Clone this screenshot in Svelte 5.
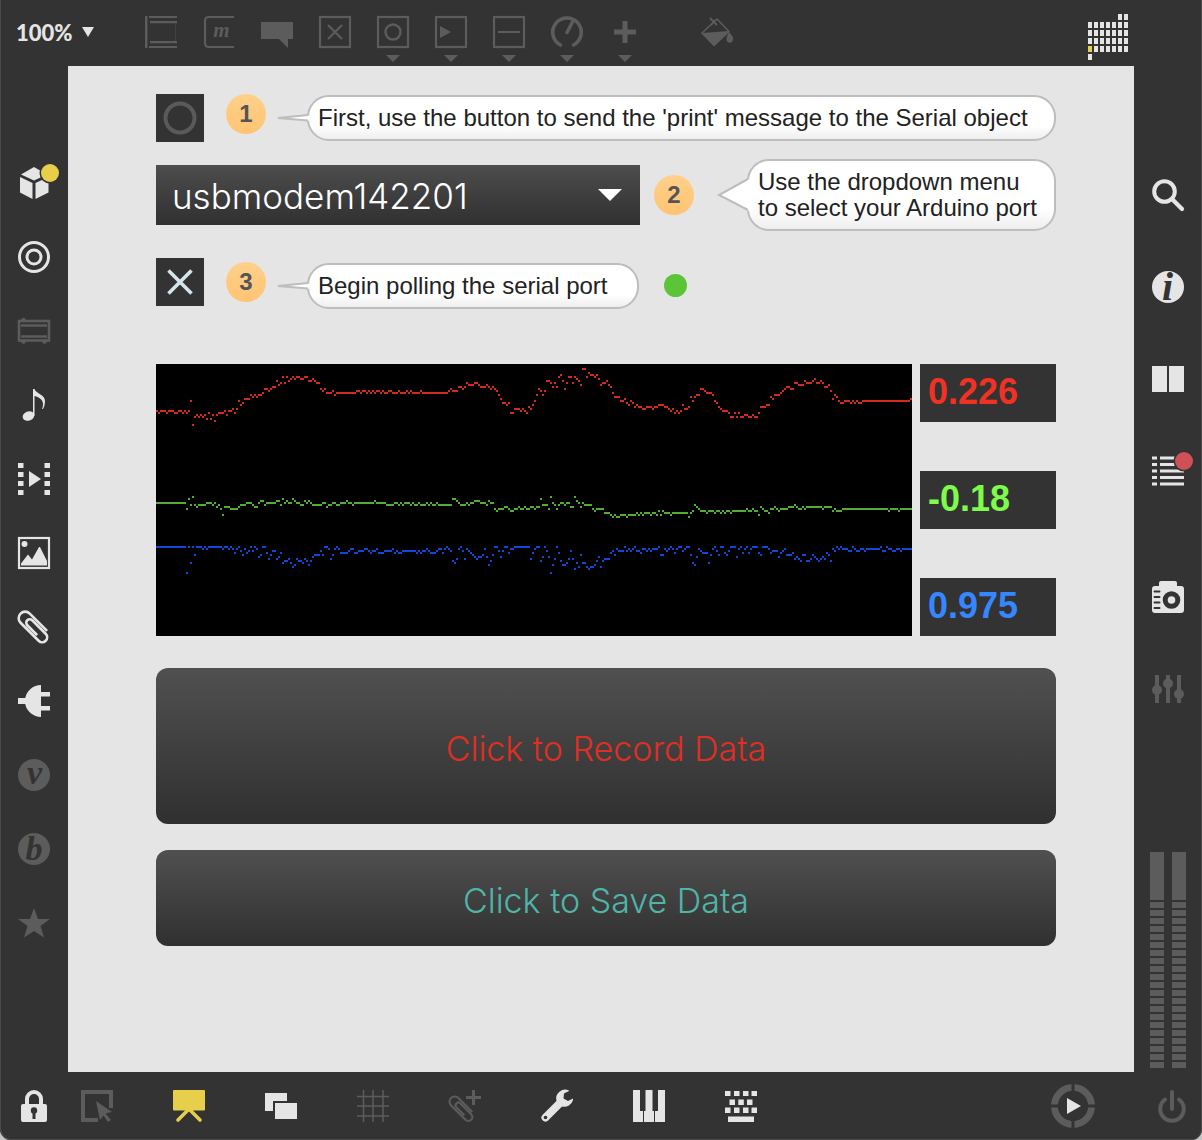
<script>
  const clip = '<path transform="rotate(45 16 16)" d="M28 9.5H3.5a6.5 6.5 0 0 0 0 13H29a5 5 0 0 0 0-10H10a3.5 3.5 0 0 0 0 7H24" fill="none" stroke="currentColor" stroke-width="2.6"/>';
  const frame = '<rect x="1" y="1" width="30" height="30" fill="none" stroke="currentColor" stroke-width="2.200"/>';
  const glyph = (letter, size, x, y) =>
    `<text x="${x}" y="${y}" text-anchor="middle" font-family="Liberation Serif, serif" font-style="italic" font-weight="700" font-size="${size}" fill="#333">${letter}</text>`;

  const matrixCells = [[5, 0], [6, 0], [0, 5]];
  for (let row = 1; row < 5; row++) for (let col = 0; col < 7; col++) matrixCells.push([col, row]);

  const icons = {
    object: '<path d="M0 0h2.500v32H0zM4 0h28v2H4zM5 5h27v2.200H5zM5 25h27v2.200H5zM4 30h28v2H4z"/><path d="M30.500 7v18" stroke="currentColor" stroke-width=".4"/>',
    message: '<path d="M31 1H6Q2 1 2 5v22q0 4 4 4h25" fill="none" stroke="currentColor" stroke-width="2.200"/><text x="18.500" y="21" text-anchor="middle" font-family="Liberation Serif, serif" font-style="italic" font-weight="700" font-size="21">m</text>',
    comment: '<path d="M0 6h32v17h-5v9l-9-9H0z"/>',
    toggle: frame + '<path d="M9 9l14 14M23 9L9 23" stroke="currentColor" stroke-width="2.2"/>',
    button: frame + '<circle cx="16" cy="16" r="7.500" fill="none" stroke="currentColor" stroke-width="2.4"/>',
    number: frame + '<path d="M5 10l11 6-11 6z"/>',
    slider: frame + '<path d="M5 16h22" stroke="currentColor" stroke-width="2"/>',
    dial: '<path d="M9.500 29A14.300 14.300 0 1 1 22.500 29M16 16.500L22 5" fill="none" stroke="currentColor" stroke-width="3.600" stroke-linecap="round"/>',
    add: '<path d="M13.500 5h5v8.500H27v5h-8.500V27h-5v-8.500H5v-5h8.500z"/>',
    paint: '<path d="M1 17L16 3l12 12.500-15 14z" fill="none" stroke="currentColor" stroke-width="1.500"/><path d="M1 17l27-2-15 15z"/><path d="M9 2l7 7M14 4l-4 5" stroke="currentColor" stroke-width="1.800"/><path d="M28 16q5 5 4 8a3.300 3.300 0 0 1-6.500 0q-.2-3 2.500-8z"/>',
    cube: '<path d="M3 7.500L16 0l13 7.500-13 6zM2 10l12.500 6v16L2 25.500zM17.500 16l13-6v15.500l-13 6.500z"/><circle cx="32" cy="6" r="10.500" fill="#333"/><circle cx="32" cy="6" r="9" fill="#e7cf4b"/>',
    target: '<g fill="none" stroke="currentColor" stroke-width="3"><circle cx="16" cy="16" r="14.500"/><circle cx="16" cy="16" r="7"/></g>',
    rack: '<rect x="1" y="6" width="30" height="19.500" fill="none" stroke="currentColor" stroke-width="2.600"/><path d="M3 10.500h26M3 21.500h26" stroke="currentColor" stroke-width="2.400"/><circle cx="5.500" cy="5" r="2.300"/><circle cx="5.500" cy="26.500" r="2.300"/><circle cx="26.500" cy="26.500" r="2.300"/>',
    note: '<ellipse cx="10.500" cy="27" rx="6" ry="4.600" transform="rotate(-22 10.500 27)"/><path d="M15 0h1.500c1.500 5 11 5 10.500 13q-.2 4-2 7h-1q4-10-7.500-13v20H15z"/>',
    film: '<path d="M0 0h5.500v5H0zM0 9h5.500v5H0zM0 18h5.500v5H0zM0 27h5.500v5H0zM26.500 0H32v5h-5.500zM26.500 9H32v5h-5.500zM26.500 18H32v5h-5.500zM26.500 27H32v5h-5.500zM11 8l12 8-12 8z"/>',
    image: frame + '<circle cx="6.500" cy="7" r="3"/><path d="M3 28.500v-2l7-9 4 5L21 10h1l7 14v4.500z"/>',
    clip,
    plug: '<path d="M0 13h7.200A16.300 16.300 0 0 1 23 0v7h9v4.500h-9v9.500h9v4.500h-9V32A16.300 16.300 0 0 1 7.200 19H0z"/>',
    vizzie: '<circle cx="16" cy="16" r="16"/>' + glyph('v', 34, 16.5, 24.5),
    beap: '<circle cx="16" cy="16" r="16"/>' + glyph('b', 34, 16, 27),
    star: '<path d="M16 1l4 11h12l-9.500 7 3.500 11.500L16 24 6 30.500 9.500 19 0 12h12z"/>',
    search: '<circle cx="12.500" cy="12.500" r="10.300" fill="none" stroke="currentColor" stroke-width="4"/><path d="M20 20l10 10" stroke="currentColor" stroke-width="4.200" stroke-linecap="round"/>',
    info: '<circle cx="16" cy="16" r="16"/>' + glyph('i', 40, 15.5, 29),
    book: '<path d="M0 3h15v26H0zM17 3h15v26H17z"/>',
    list: '<path d="M0 1.500h5v3H0zM8 1.500h24v3H8zM0 8h5v3H0zM8 8h24v3H8zM0 14.500h5v3H0zM8 14.500h24v3H8zM0 21h5v3H0zM8 21h24v3H8zM0 27.500h5v3H0zM8 27.500h24v3H8z"/><circle cx="32" cy="6" r="10.500" fill="#333"/><circle cx="32" cy="6" r="9" fill="#cf5055"/>',
    camera: '<path d="M9 0h14q2 0 2 2v3h4q3 0 3 3v21q0 3-3 3H3q-3 0-3-3V8q0-3 3-3h4V2q0-2 2-2z"/><circle cx="19.500" cy="19" r="6.300" fill="none" stroke="#333" stroke-width="5"/><path d="M2.500 10.500h5M2.500 16h5M2.500 21.500h5M2.500 27h5" stroke="#333" stroke-width="2" stroke-linecap="round"/>',
    mixer: '<path d="M5 2v28M16 2v28M27 2v28" stroke="currentColor" stroke-width="4"/><circle cx="5" cy="17" r="5"/><circle cx="16" cy="10.500" r="5"/><circle cx="27" cy="21" r="5"/>',
    lock: '<path d="M9 15V9a7 7 0 0 1 14 0v6" fill="none" stroke="currentColor" stroke-width="4"/><rect x="3" y="14" width="26" height="18" rx="2"/><circle cx="16" cy="20.500" r="3.200" fill="#333"/><path d="M14.500 21h3v8h-3z" fill="#333"/>',
    pointer: '<path d="M30 18V2H2v28h15" fill="none" stroke="currentColor" stroke-width="4"/><path d="M15 11l16 11-6.500 1.500L30 30l-3 2-4.500-6.500L19 30z"/>',
    present: '<rect width="32" height="20.500" rx="1"/><path d="M16 19L5 30M16 19l11 11" stroke="currentColor" stroke-width="3.600" stroke-linecap="round"/>',
    windows: '<path d="M0 3h22v8H8v10H0z"/><path d="M10 13h22v16H10z"/>',
    grid: '<path d="M6.500 0v32M16 0v32M26 0v32M0 6.500h32M0 16h32M0 26h32" stroke="currentColor" stroke-width="1.500"/>',
    clipAdd: `<g transform="translate(0 6) scale(.8)">${clip}</g><path d="M23 0h3v6h6v3h-6v6h-3V9h-6V6h6z"/>`,
    wrench: '<path d="M4.500 27.500L19 13" stroke="currentColor" stroke-width="8" stroke-linecap="round"/><path d="M28 .5A9 9 0 0 0 15.500 11L21 16.500A9 9 0 0 0 32 10V8.500l-5 2.500-4.500-2.500.5-5L28 1z"/><circle cx="4.500" cy="27.500" r="1.800" fill="#333"/>',
    piano: '<path d="M0 0h7v21h3v11H0zM12.500 0h7v21h1.500v11H11V21h1.500zM25 0h7v32H22V21h3z"/>',
    keyboard: '<path d="M0 1h5.500v5H0zM9 1h5.500v5H9zM18 1h5.500v5H18zM26.500 1H32v5h-5.500zM4.500 9.500H10V15H4.500zM13.300 9.500h5.500V15h-5.500zM22 9.500h5.500V15H22zM0 17.500h5.500V23H0zM9 17.500h5.500V23H9zM18 17.500h5.500V23H18zM26.500 17.500H32V23h-5.500zM3 26.500h26v5.500H3z"/>',
    power: '<path d="M9 9.500a11.800 11.800 0 1 0 14 0M16 2v17" fill="none" stroke="currentColor" stroke-width="4" stroke-linecap="round"/>'
  };

  const tools = [
    ['object', 'Object'], ['message', 'Message'], ['comment', 'Comment'], ['toggle', 'Toggle'],
    ['button', 'Button', true], ['number', 'Number', true], ['slider', 'Slider', true],
    ['dial', 'Dial', true], ['add', 'Add', true]
  ];
  const browse = [
    ['cube', 'Packages', 'lit'], ['target', 'Objects', 'lit'], ['rack', 'Modules', ''], ['note', 'Audio', 'lit'],
    ['film', 'Video', 'lit'], ['image', 'Images', 'lit'], ['clip', 'Snippets', 'lit'], ['plug', 'Plug-ins', 'lit'],
    ['vizzie', 'Vizzie', ''], ['beap', 'Beap', ''], ['star', 'Favorites', '']
  ];
  const inspect = [
    ['search', 'Search', 'lit'], ['info', 'Inspector', 'lit'], ['book', 'Reference', 'lit'], ['list', 'Console', 'lit']
  ];
  const extras = [['camera', 'Snapshots', 'lit'], ['mixer', 'Parameters', '']];
  const modes = [
    ['present', 'Presentation', 'gold'], ['windows', 'Views', 'lit'], ['grid', 'Grid', ''], ['clipAdd', 'Add snippet', ''],
    ['wrench', 'Settings', 'lit'], ['piano', 'MIDI', 'lit'], ['keyboard', 'Keys', 'lit']
  ];

  // Each entry is "sample:level"; a level holds until the next entry.
  const SAMPLES = 378;
  const traces = [
    { color: '#d42a1e', data: '0:23 1:24 2:23 5:24 6:23 9:24 11:23 13:24 14:23 15:24 16:23 17:18 18:30 19:26 20:25 21:26 22:25 23:26 24:25 25:27 26:24 27:27 28:25 29:28 30:25 31:24 34:23 35:25 36:23 38:22 39:24 40:22 41:18 42:20 43:19 44:17 47:15 48:16 49:15 50:16 51:15 53:14 54:12 56:13 57:12 58:11 60:8 61:10 62:9 63:6 64:9 65:6 66:8 67:7 68:6 69:7 70:6 72:7 74:6 76:8 78:7 79:8 80:9 82:12 83:13 84:12 85:14 88:13 89:15 90:14 100:13 102:14 103:13 105:14 106:13 107:14 108:13 109:14 110:13 112:14 113:13 114:14 116:13 118:14 121:13 122:14 125:13 126:14 127:13 128:14 132:13 133:14 146:13 147:12 148:13 151:11 153:12 154:11 155:9 156:10 159:9 161:10 162:11 165:10 166:11 167:12 168:11 169:12 170:13 171:15 172:17 173:19 175:20 176:19 177:24 179:22 182:23 183:22 184:23 185:24 186:21 187:22 188:20 189:18 190:15 191:12 192:13 193:15 194:13 195:8 197:9 198:11 199:9 200:11 201:6 202:5 203:8 204:12 205:9 206:6 208:9 209:6 210:7 211:8 212:10 213:2 215:6 216:4 217:5 219:6 220:5 221:7 222:10 223:9 225:8 226:10 227:11 228:14 229:16 232:18 234:17 235:19 236:20 237:18 238:19 239:21 240:20 241:21 243:22 245:21 248:22 249:21 251:20 254:21 256:22 257:23 258:22 259:24 260:23 261:24 262:23 263:20 264:22 266:21 267:16 268:18 269:16 270:15 272:12 274:13 275:14 278:15 279:18 280:19 281:21 282:22 283:23 286:24 287:26 289:24 290:26 291:24 292:26 294:25 296:26 298:25 299:26 301:24 302:21 305:20 307:16 308:17 309:15 312:14 313:13 314:12 315:11 317:12 319:9 321:10 324:8 325:9 328:8 329:7 330:9 332:8 333:9 334:11 336:10 337:13 338:17 339:15 340:16 341:18 342:19 344:18 347:19 348:18 349:19 350:18 351:19 353:18 377:17' },
    { color: '#52ae33', data: '0:69 15:72 16:67 17:70 18:66 19:70 20:71 21:70 25:69 28:70 29:69 30:71 31:70 32:72 33:75 34:71 37:72 41:71 42:70 45:69 48:70 49:71 51:69 52:68 54:70 55:69 60:68 62:70 63:67 64:69 65:68 66:69 68:67 69:68 70:69 72:70 74:68 75:69 76:68 77:69 78:70 83:69 85:71 86:70 88:69 90:70 92:69 95:68 96:69 98:70 99:69 109:68 110:69 115:70 119:69 121:70 122:69 123:70 124:69 127:70 128:69 129:70 131:69 132:70 135:69 136:70 137:69 138:70 140:69 141:70 148:67 150:68 151:69 152:70 155:69 156:70 157:69 159:68 162:69 165:70 166:68 167:69 169:72 170:73 171:72 174:71 176:72 177:73 179:72 181:71 182:72 184:71 185:72 187:71 189:72 190:71 192:67 193:70 196:72 197:66 198:69 199:70 200:72 201:70 202:69 204:70 205:69 207:71 209:66 210:68 211:69 212:71 213:69 214:70 218:72 219:73 220:72 224:74 227:75 228:76 229:75 230:76 232:75 235:76 236:75 240:74 241:75 242:74 243:75 244:74 247:75 248:74 250:75 251:73 252:75 253:73 254:74 257:75 258:74 266:76 267:74 268:73 269:70 270:71 271:72 272:73 275:74 276:73 279:74 280:73 282:74 283:73 284:74 285:73 287:74 288:73 295:72 296:73 298:72 299:73 301:75 302:71 303:72 304:73 306:74 307:72 309:71 310:72 311:73 312:72 316:71 319:70 320:71 321:72 323:71 324:72 325:71 333:72 334:71 338:73 339:72 340:73 343:72 366:73 367:72 371:73 372:72' },
    { color: '#1247dc', data: '0:91 15:104 16:91 17:99 18:91 19:95 20:91 23:92 24:91 25:92 26:91 33:92 34:91 36:92 37:91 38:92 39:94 40:92 41:91 42:93 43:95 44:92 45:94 46:93 47:91 48:93 49:91 50:92 51:96 52:95 53:91 55:94 56:97 57:95 58:93 60:97 61:96 62:94 63:99 64:98 66:97 67:99 68:101 69:100 70:97 71:98 73:99 74:97 75:98 76:100 77:98 78:96 79:95 82:93 83:95 84:91 86:92 87:97 88:95 89:92 90:91 91:92 92:94 96:93 97:92 99:94 101:93 104:92 106:93 107:94 108:93 110:92 111:94 114:93 118:92 119:94 120:93 121:94 123:93 130:94 131:93 132:94 133:93 135:92 136:93 137:94 140:93 141:92 143:94 144:92 145:91 146:92 147:93 148:98 149:99 150:97 151:92 152:91 153:93 154:97 155:92 156:93 157:94 158:95 159:96 160:97 161:96 163:95 164:92 165:96 166:100 167:98 168:95 169:91 171:93 172:96 173:93 174:91 176:94 177:92 179:91 187:97 188:94 189:92 190:91 192:98 193:96 194:91 195:93 196:96 197:104 198:100 199:97 200:91 201:94 202:98 203:100 205:99 206:97 207:93 208:97 209:102 210:99 211:101 212:95 213:99 215:101 216:102 217:101 219:100 220:98 221:96 222:101 223:98 224:97 227:94 228:93 229:95 230:92 231:93 234:91 235:93 236:92 237:93 238:92 239:91 240:93 242:94 243:92 245:93 246:92 247:93 248:92 251:91 252:95 254:92 255:93 256:92 257:91 258:92 259:94 260:92 261:91 263:93 264:92 265:91 267:95 268:99 269:100 270:96 271:92 272:93 273:94 276:99 277:95 278:92 279:91 280:93 281:95 282:91 284:94 285:95 286:93 287:91 290:96 291:92 292:91 293:94 294:92 295:91 296:94 297:92 298:91 301:94 302:95 303:91 306:92 307:94 308:93 311:96 312:94 313:93 314:92 315:95 318:94 319:97 320:96 321:97 322:98 323:95 325:98 327:97 328:95 329:96 330:97 331:98 332:97 333:96 334:97 335:94 336:95 337:98 338:92 339:93 340:91 341:92 342:91 343:92 346:93 348:91 349:92 350:93 352:92 354:93 355:92 362:91 363:93 365:91 366:92 368:93 370:92 372:93 373:92' }
  ].map((trace) => {
    const runs = trace.data.split(' ').map((pair) => pair.split(':').map(Number));
    const d = runs.map(([x, y], i) => `M${x} ${y}.5H${i + 1 < runs.length ? runs[i + 1][0] : SAMPLES}`).join('');
    return { color: trace.color, d };
  });

  const readings = [
    { axis: 'X', value: '0.226', tone: 'red' },
    { axis: 'Y', value: '-0.18', tone: 'green' },
    { axis: 'Z', value: '0.975', tone: 'blue' }
  ];

  let polling = $state(true);
  let port = $state('usbmodem142201');
</script>

{#snippet icon(name)}
  <svg class="icon" viewBox="0 0 32 32" fill="currentColor" aria-hidden="true">{@html icons[name]}</svg>
{/snippet}

{#snippet iconButton([name, label, tone])}
  <button class="tool {tone}" aria-label={label}>{@render icon(name)}</button>
{/snippet}

{#snippet shortTail()}
  <svg class="tail" viewBox="0 0 31 46" aria-hidden="true"><path d="M31 20.500L0 23l31 3z" fill="#fff" /><path d="M30 20L0 23l30 2.500" fill="none" stroke="#bdbdbd" stroke-width="1.800" /></svg>
{/snippet}

<div class="window">
  <header>
    <button class="zoom">100%<svg viewBox="0 0 12 10" aria-hidden="true"><path d="M0 0h12L6 10z" fill="currentColor" /></svg></button>
    <nav class="tools" aria-label="Objects">
      {#each tools as [name, label, more]}
        <button class="tool" aria-label={label}>
          {@render icon(name)}
          {#if more}<svg class="more" viewBox="0 0 14 7" aria-hidden="true"><path d="M0 0h14L7 7z" fill="currentColor" /></svg>{/if}
        </button>
      {/each}
    </nav>
    <button class="tool" aria-label="Format">{@render icon('paint')}</button>
    <button class="calendar" aria-label="Matrix">
      <svg viewBox="0 0 40 46" aria-hidden="true">
        {#each matrixCells as [col, row]}
          <rect x={col * 6} y={row * 8} width="4" height="6" fill={col === 0 && row === 4 ? '#e7cf4b' : '#e5e5e5'} />
        {/each}
      </svg>
    </button>
  </header>

  <aside class="left">
    {#each browse as item}{@render iconButton(item)}{/each}
  </aside>

  <main>
    <div class="row">
      <button class="bang" aria-label="Print ports">
        <svg viewBox="0 0 48 48" aria-hidden="true"><circle cx="24" cy="24" r="14.500" fill="none" stroke="#5a5a5a" stroke-width="4" /></svg>
      </button>
      <div class="note">
        <span class="badge">1</span>
        <p class="bubble grow">
          {@render shortTail()}
          First, use the button to send the 'print' message to the Serial object
        </p>
      </div>
    </div>

    <div class="row second">
      <div class="port">
        <select bind:value={port} aria-label="Serial port"><option>usbmodem142201</option></select>
        <svg viewBox="0 0 24 12" aria-hidden="true"><path d="M0 0h24L12 12z" fill="#fff" /></svg>
      </div>
      <span class="badge">2</span>
      <p class="bubble two">
        <svg class="tail" viewBox="0 0 31 72" aria-hidden="true"><path d="M31 20L1 36l30 16z" fill="#fff" /><path d="M30 20L1 36l29 15" fill="none" stroke="#bdbdbd" stroke-width="2" /></svg>
        Use the dropdown menu<br />to select your Arduino port
      </p>
    </div>

    <div class="row third">
      <label class="check">
        <input type="checkbox" bind:checked={polling} aria-label="Poll the serial port" />
        {#if polling}<svg viewBox="0 0 48 48" aria-hidden="true"><path d="M12.500 12.500l23 23M35.500 12.500l-23 23" stroke="#d5e6ea" stroke-width="3.600" /></svg>{/if}
      </label>
      <div class="note">
        <span class="badge">3</span>
        <p class="bubble short">
          {@render shortTail()}
          Begin polling the serial port
        </p>
        <span class="status" role="img" aria-label="Active"></span>
      </div>
    </div>

    <div class="plot">
      <svg class="chart" viewBox="0 0 378 136" shape-rendering="crispEdges" role="img" aria-label="Sensor traces">
        {#each traces as trace}<path d={trace.d} stroke={trace.color} fill="none" />{/each}
      </svg>
      <div class="readings">
        {#each readings as reading}
          <output class={reading.tone} aria-label={reading.axis}>{reading.value}</output>
        {/each}
      </div>
    </div>

    <button class="action record">Click to Record Data</button>
    <button class="action save">Click to Save Data</button>
  </main>

  <aside class="right">
    {#each inspect as item}{@render iconButton(item)}{/each}
    <div class="extras">
      {#each extras as item}{@render iconButton(item)}{/each}
    </div>
    <div class="meters" role="img" aria-label="Output level">
      {#each [0, 1] as channel}
        <div class="meter">
          <i class="clipping"></i>
          {#each { length: 21 } as _}<i></i>{/each}
        </div>
      {/each}
    </div>
  </aside>

  <footer>
    <button class="tool lit" aria-label="Lock">{@render icon('lock')}</button>
    <button class="tool pointer" aria-label="Operate">{@render icon('pointer')}</button>
    <div class="modes">
      {#each modes as item}{@render iconButton(item)}{/each}
    </div>
    <button class="run" aria-label="Run">
      <svg viewBox="0 0 44 44" aria-hidden="true">
        <circle cx="22" cy="22" r="18.500" fill="none" stroke="#5c5c5c" stroke-width="7" />
        <path d="M22 0v44M0 22h44" stroke="#333" stroke-width="3" />
        <circle cx="22" cy="22" r="15" fill="#333" />
        <path d="M16 14l14 8-14 8z" fill="#e5e5e5" />
      </svg>
    </button>
    <button class="tool" aria-label="Audio">{@render icon('power')}</button>
  </footer>
</div>

<style>
  :global(body) {
    margin: 0;
    background: #c4c4c4;
  }
  .window {
    box-sizing: border-box;
    min-height: 100vh;
    display: grid;
    grid-template: 66px 1fr 68px / 68px minmax(0, 1fr) 68px;
    background: #333;
    border-radius: 0 0 11px 11px;
    box-shadow: inset 1px -1px #4a4a4a, inset -1px 0 #4a4a4a;
    font-family: "Liberation Sans", Arial, sans-serif;
    color: #222;
  }
  button {
    border: 0;
    padding: 0;
    background: none;
    font: inherit;
    color: inherit;
    cursor: pointer;
  }
  svg {
    display: block;
    overflow: visible;
  }
  header {
    grid-column: 1 / -1;
    display: flex;
    align-items: center;
    box-sizing: border-box;
    padding: 0 74px 2px 16px;
  }
  .zoom {
    display: flex;
    align-items: center;
    gap: 10px;
    width: 129px;
    font: 900 22px Lato, sans-serif;
    color: #e5e5e5;
  }
  .zoom svg {
    width: 12px;
  }
  .tools {
    display: flex;
    gap: 26px;
    margin-right: 60px;
  }
  .tool {
    position: relative;
    width: 32px;
    height: 32px;
    flex: none;
    color: #5c5c5c;
  }
  .lit {
    color: #e5e5e5;
  }
  .gold {
    color: #e7cf4b;
  }
  .icon {
    width: 32px;
    height: 32px;
  }
  .more {
    position: absolute;
    left: 9px;
    top: 39px;
    width: 14px;
  }
  .calendar {
    margin-left: auto;
    padding-top: 10px;
  }
  .calendar svg {
    width: 40px;
  }
  aside {
    display: flex;
    flex-direction: column;
    align-items: center;
  }
  .left {
    gap: 42px;
    padding-top: 101px;
  }
  .right {
    gap: 60px;
    padding: 113px 0 4px;
  }
  .extras {
    display: grid;
    gap: 60px;
    padding-top: 34px;
  }
  .meters {
    display: flex;
    gap: 8px;
    margin-top: auto;
  }
  .meter {
    display: grid;
    gap: 2px;
    width: 14px;
  }
  .meter i {
    height: 6px;
    background: #5c5c5c;
  }
  .meter .clipping {
    height: 48px;
  }
  main {
    background: #e5e5e5;
    padding: 28px 78px 40px 88px;
  }
  .row {
    display: flex;
    align-items: flex-start;
  }
  .row.second {
    align-items: center;
    margin: 17px 0 27px;
  }
  .note {
    display: flex;
    flex: 1;
    align-items: flex-start;
    margin-left: 22px;
  }
  .note .bubble {
    margin-top: 1px;
  }
  .third .note {
    padding-top: 4px;
  }
  .bang,
  .check {
    position: relative;
    width: 48px;
    height: 48px;
    flex: none;
    background: #333;
  }
  .check input {
    position: absolute;
    inset: 0;
    margin: 0;
    appearance: none;
  }
  .badge {
    flex: none;
    width: 40px;
    border-radius: 50%;
    background: linear-gradient(#ffd08a, #ffc473);
    font-weight: 700;
    font-size: 24px;
    line-height: 40px;
    text-align: center;
    color: #555;
  }
  .bubble {
    position: relative;
    box-sizing: border-box;
    margin: 0 0 0 41px;
    padding: 8px 9px;
    border: 2px solid #bdbdbd;
    border-radius: 22px;
    background: linear-gradient(#fff 70%, #eee);
    font-size: 24px;
    line-height: 26px;
    color: #222;
  }
  .grow {
    flex: 1;
  }
  .two {
    width: 309px;
    margin-left: 53px;
  }
  .short {
    width: 332px;
  }
  .tail {
    position: absolute;
    left: -31px;
    top: -2px;
    width: 31px;
  }
  .status {
    align-self: center;
    width: 23px;
    height: 23px;
    margin-left: 25px;
    border-radius: 50%;
    background: #5cc437;
  }
  .port {
    position: relative;
    flex: 1;
    height: 60px;
    margin-right: 14px;
  }
  .port select {
    appearance: none;
    width: 100%;
    height: 100%;
    padding: 2px 16px 0;
    border: 0;
    border-radius: 0;
    background: linear-gradient(#4d4d4d, #303030);
    color: #fff;
    font: 300 35px Inter, "Liberation Sans", sans-serif;
  }
  .port svg {
    position: absolute;
    right: 18px;
    top: 24px;
    width: 24px;
    pointer-events: none;
  }
  .plot {
    display: flex;
    gap: 8px;
    margin: 55px 0 32px;
  }
  .chart {
    flex: 1;
    min-width: 0;
    background: #000;
  }
  .readings {
    display: flex;
    flex-direction: column;
    justify-content: space-between;
    width: 136px;
  }
  output {
    padding: 0 8px 2px;
    background: #333;
    font-weight: 700;
    font-size: 36px;
    line-height: 56px;
  }
  .red {
    color: #f03224;
  }
  .green {
    color: #7dfc4a;
  }
  .blue {
    color: #3586ff;
  }
  .action {
    display: block;
    width: 100%;
    padding-top: 4px;
    border-radius: 12px;
    background: linear-gradient(#505050, #303030);
    font: 300 34px Inter, "Liberation Sans", sans-serif;
  }
  .record {
    height: 156px;
    margin-bottom: 26px;
    color: #e02e22;
  }
  .save {
    height: 96px;
    color: #4fb5a8;
  }
  footer {
    grid-column: 1 / -1;
    display: flex;
    align-items: center;
    padding: 0 14px 0 18px;
  }
  .pointer {
    margin-left: 31px;
  }
  .modes {
    display: flex;
    gap: 60px;
    margin-left: 60px;
  }
  .run {
    width: 44px;
    margin: 0 61px 0 auto;
  }
</style>
